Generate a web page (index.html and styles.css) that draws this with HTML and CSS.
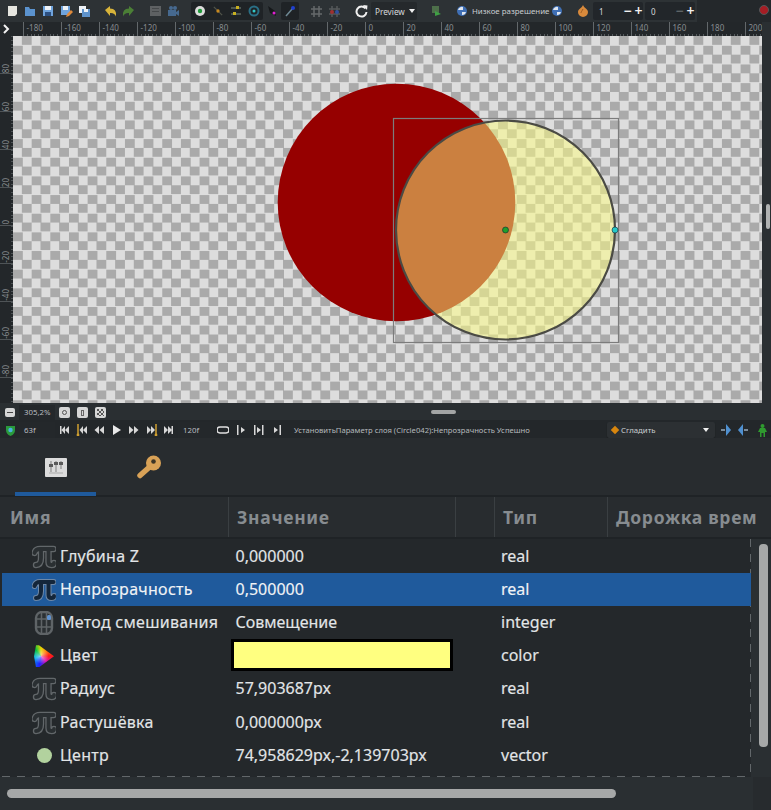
FILE: index.html
```html
<!DOCTYPE html>
<html lang="ru">
<head>
<meta charset="utf-8">
<title>Synfig</title>
<link rel="stylesheet" href="styles.css">
</head>
<body>
<svg class="defs" width="0" height="0">
  <symbol id="pi" viewBox="0 0 24 24"><path d="M2.500 8 Q3.500 4 8 4 H21.500 M9 4 V13 Q9 20 4 20 M16.500 4 V17 Q16.500 20 19.500 20 Q22 20 22 18" fill="none" stroke="#62676a" stroke-width="6.400" stroke-linecap="round" stroke-linejoin="round"/><path d="M2.500 8 Q3.500 4 8 4 H21.500 M9 4 V13 Q9 20 4 20 M16.500 4 V17 Q16.500 20 19.500 20 Q22 20 22 18" fill="none" stroke="#2a2f32" stroke-width="3.800" stroke-linecap="round" stroke-linejoin="round"/></symbol>
  <symbol id="pi-sel" viewBox="0 0 24 24"><path d="M2.500 8 Q3.500 4 8 4 H21.500 M9 4 V13 Q9 20 4 20 M16.500 4 V17 Q16.500 20 19.500 20 Q22 20 22 18" fill="none" stroke="#6f88a6" stroke-width="6" stroke-linecap="round" stroke-linejoin="round"/><path d="M2.500 8 Q3.500 4 8 4 H21.500 M9 4 V13 Q9 20 4 20 M16.500 4 V17 Q16.500 20 19.500 20 Q22 20 22 18" fill="none" stroke="#14263a" stroke-width="4" stroke-linecap="round" stroke-linejoin="round"/></symbol>
  <symbol id="prev" viewBox="0 0 12 12"><path d="M2 2h1.500v8H2zM7 2v8L3.500 6zM11 2v8L7 6z" fill="#d8d8d8"/></symbol>
  <symbol id="back" viewBox="0 0 12 12"><path d="M6 2v8L1.500 6zM11 2v8L6.500 6z" fill="#d8d8d8"/></symbol>
  <symbol id="fwd" viewBox="0 0 12 12"><path d="M1 2v8l4.500-4zM6 2v8l4.500-4z" fill="#d8d8d8"/></symbol>
  <symbol id="next" viewBox="0 0 12 12"><path d="M1 2v8l4-4zM5 2v8l4-4zM8.500 2H10v8H8.500z" fill="#d8d8d8"/></symbol>
  <symbol id="keyprev" viewBox="0 0 12 12"><path d="M7 2v8L3.500 6zM11 2v8L7 6z" fill="#d8d8d8"/><path d="M2 0v12" stroke="#d0a030" stroke-width="1.500"/><circle cx="2" cy="11" r="1.400" fill="#d0a030"/></symbol>
  <symbol id="keynext" viewBox="0 0 12 12"><path d="M1 2v8l4-4zM5 2v8l4-4z" fill="#d8d8d8"/><path d="M10 0v12" stroke="#d0a030" stroke-width="1.500"/><circle cx="10" cy="11" r="1.400" fill="#d0a030"/></symbol>
  <symbol id="ball" viewBox="0 0 12 12"><circle cx="6" cy="6" r="5" fill="#3f6fb5"/><path d="M2 5a4 4 0 0 1 5-3v3zM6 7h4a4 4 0 0 1-4 3z" fill="#dfe6ef"/></symbol>
</svg>

<div class="app">
  <header class="toolbar">
    <div class="tools">
      <span class="slot"><svg width="11" height="12" viewBox="0 0 11 12"><path d="M1 1h9v8l-2 2H1z" fill="#e6e6e0"/></svg></span>
      <span class="slot"><svg width="12" height="11" viewBox="0 0 12 11"><path d="M1 1h4l1 2h5v7H1z" fill="#5b93cf"/></svg></span>
      <span class="slot"><svg width="12" height="12" viewBox="0 0 12 12"><path d="M1 1h10v10H1z" fill="#6fa3dc"/><path d="M3 1h6v4H3z" fill="#eef2f7"/><path d="M3 7h6v4H3z" fill="#2c4f80"/></svg></span>
      <span class="slot"><svg width="13" height="13" viewBox="0 0 13 13"><path d="M1 1h9v9H1z" fill="#6fa3dc"/><path d="M3 1h5v4H3z" fill="#eef2f7"/><path d="M6 12l1-3 4-4 2 2-4 4z" fill="#df8a3c"/></svg></span>
      <span class="slot"><svg width="13" height="13" viewBox="0 0 13 13"><path d="M1 1h7v7H1z" fill="#eef2f7"/><path d="M4 4h8v8H4z" fill="#5f93cc"/><path d="M6 4h4v3H6z" fill="#eef2f7"/></svg></span>
      <span class="gap8"></span>
      <span class="slot"><svg width="13" height="11" viewBox="0 0 13 11"><path d="M1 4l5-4v2.500q7 0 6 8-1.500-4-6-3.500V10z" fill="#d8b43a"/></svg></span>
      <span class="slot"><svg width="13" height="11" viewBox="0 0 13 11"><path d="M12 4L7 0v2.500q-7 0-6 8 1.500-4 6-3.500V10z" fill="#4b7f36"/></svg></span>
      <span class="gap9"></span>
      <span class="slot"><svg width="13" height="12" viewBox="0 0 13 12"><path d="M1 1h11v10H1z" fill="#5e6163"/><path d="M3 3h7v1H3zM3 6h7v1H3z" fill="#45484a"/></svg></span>
      <span class="slot"><svg width="13" height="12" viewBox="0 0 13 12"><path d="M1 5h8v6H1zM9 7l3-2v6l-3-2z" fill="#46698f"/><circle cx="4" cy="3" r="2" fill="#46698f"/><circle cx="8" cy="3" r="2" fill="#46698f"/></svg></span>
      <span class="gap9"></span>
      <div class="tool-group">
        <span class="slot"><svg width="12" height="12" viewBox="0 0 12 12"><circle cx="6" cy="6" r="5" fill="#dcdcdc"/><circle cx="6" cy="6" r="2.200" fill="#1f9a3a"/></svg></span>
        <span class="slot"><svg width="10" height="10" viewBox="0 0 12 12"><path d="M1 1l10 10" stroke="#50544a" stroke-width="1.500"/><circle cx="6" cy="6" r="2" fill="#c88a20"/></svg></span>
        <span class="slot"><svg width="12" height="12" viewBox="0 0 12 12"><path d="M1 3h10M1 9h10" stroke="#5e6a60" stroke-width="1.500"/><path d="M6 1h3v3H6z" fill="#c8b020"/><path d="M3 7h3v3H3z" fill="#c8b020"/></svg></span>
        <span class="slot"><svg width="12" height="12" viewBox="0 0 12 12"><circle cx="6" cy="6" r="4.500" fill="none" stroke="#2a6f85" stroke-width="2"/><circle cx="6" cy="6" r="1.500" fill="#30c8c8"/></svg></span>
      </div>
      <span class="slot"><svg width="12" height="12" viewBox="0 0 12 12"><path d="M2 1l7 5 1 5-6-3z" fill="#15181a"/><circle cx="8" cy="8" r="1.500" fill="#e020d0"/></svg></span>
      <span class="slot active"><svg width="12" height="12" viewBox="0 0 12 12"><path d="M2 11l7-8" stroke="#6f8a95" stroke-width="1.500"/><circle cx="9" cy="3" r="2" fill="#2040d0"/></svg></span>
      <span class="gap8"></span>
      <span class="slot"><svg width="13" height="13" viewBox="0 0 13 13"><path d="M1 4h11M1 9h11M4 1v11M9 1v11" stroke="#65696b" stroke-width="1.500"/></svg></span>
      <span class="slot"><svg width="13" height="13" viewBox="0 0 13 13"><path d="M1 4h11M1 9h11M4 1v11M9 1v11" stroke="#55595b" stroke-width="1.500"/><circle cx="4" cy="7" r="2" fill="#a03030"/><circle cx="9" cy="7" r="2" fill="#3050a0"/></svg></span>
      <span class="gap9"></span>
      <span class="slot"><svg width="13" height="13" viewBox="0 0 13 13"><path d="M10.500 3.500A5 5 0 1 0 11.500 7" fill="none" stroke="#f0f0f0" stroke-width="2"/><path d="M8 0l4.500 .5L12 5z" fill="#f0f0f0"/></svg></span>
      <button class="preview">Preview<i class="caret"></i></button>
      <span class="gap10"></span>
      <span class="slot"><svg width="12" height="12" viewBox="0 0 12 12"><path d="M2 1h7v7H2z" fill="#4d6f4a"/><path d="M5 6l6 3-6 2z" fill="#3fa044"/></svg></span>
      <span class="gap8"></span>
      <span class="slot"><svg width="12" height="12"><use href="#ball"/></svg></span>
      <span class="low-res">Низкое разрешение</span>
      <span class="slot"><svg width="12" height="12"><use href="#ball"/></svg></span>
      <span class="gap8"></span>
      <span class="slot"><svg width="12" height="12" viewBox="0 0 12 12"><path d="M6 0c1 3 5 4 5 7a5 5 0 0 1-10 0c0-3 4-4 5-7z" fill="#d98a3c"/><path d="M6 4c-1 2-2 3-2 4" stroke="#9c5a20" fill="none"/></svg></span>
      <div class="spin">1<span class="spin-btns"><b>−</b><b>+</b></span></div>
      <div class="spin spin2">0<span class="spin-btns"><b class="dim">−</b><b>+</b></span></div>
    </div>
    <span class="record"></span>
  </header>

  <section class="workspace">
    <div class="corner"><svg width="8" height="10" viewBox="0 0 8 10"><path d="M2 1l4 4-4 4" fill="none" stroke="#f2f2f2" stroke-width="2"/></svg></div>
    <div class="h-ruler">
      <span>-180</span><span>-160</span><span>-140</span><span>-120</span><span>-100</span><span>-80</span><span>-60</span><span>-40</span><span>-20</span><span>0</span><span>20</span><span>40</span><span>60</span><span>80</span><span>100</span><span>120</span><span>140</span><span>160</span><span>180</span><span>200</span>
    </div>
    <div class="corner-r"></div>
    <div class="v-ruler">
      <span><i>80</i></span><span><i>60</i></span><span><i>40</i></span><span><i>20</i></span><span><i>0</i></span><span><i>-20</i></span><span><i>-40</i></span><span><i>-60</i></span><span><i>-80</i></span>
    </div>
    <div class="canvas">
      <svg class="scene" width="749" height="367" viewBox="13 36 749 367">
        <circle cx="396.500" cy="202.500" r="118.800" fill="#960000"/>
        <circle cx="505.500" cy="230" r="109.500" fill="#ffff80" fill-opacity=".5" stroke="#4a4a44" stroke-width="2.200"/>
        <rect x="393.500" y="118.500" width="225" height="224" fill="none" stroke="#7c7c7c" stroke-width="1.200"/>
        <circle cx="505.500" cy="230" r="3" fill="#1fa02c" stroke="#123" stroke-width=".6"/>
        <circle cx="615" cy="230" r="3" fill="#26c8c8" stroke="#123" stroke-width=".6"/>
      </svg>
    </div>
    <div class="v-side"><span class="side-thumb"></span></div>
  </section>

  <section class="status">
    <span class="sq-btn narrow"><i class="minus"></i></span>
    <span class="field">305,2%</span>
    <div class="sq-group">
      <span class="sq-btn"><i class="dot"></i></span>
      <span class="sq-btn"><i class="bar"></i></span>
      <span class="sq-btn"><i class="grid4"></i></span>
    </div>
    <span class="handle"></span>
  </section>

  <section class="timebar">
    <span class="shield"><svg width="11" height="11" viewBox="0 0 11 11"><path d="M1 1h9v4q0 4-4.500 6Q1 9 1 5z" fill="#2a9a3c"/><circle cx="5.500" cy="5" r="2.200" fill="#4bb0e0"/></svg></span>
    <span class="field">63f</span>
    <div class="transport">
      <svg width="12" height="12"><use href="#prev"/></svg>
      <svg width="12" height="12"><use href="#keyprev"/></svg>
      <svg width="12" height="12"><use href="#back"/></svg>
      <svg width="12" height="12" viewBox="0 0 12 12"><path d="M2 1v10l8-5z" fill="#e8e8e8"/></svg>
      <svg width="12" height="12"><use href="#fwd"/></svg>
      <svg width="12" height="12"><use href="#keynext"/></svg>
      <svg width="12" height="12"><use href="#next"/></svg>
    </div>
    <span class="field end">120f</span>
    <div class="transport small">
      <svg width="12" height="12" viewBox="0 0 12 12"><path d="M3 3h6a3 3 0 0 1 0 6H3a3 3 0 0 1 0-6" fill="none" stroke="#e0e0e0" stroke-width="1.500"/></svg>
      <svg width="12" height="12" viewBox="0 0 12 12"><path d="M2 1h1.500v10H2zM6 3v6l4-3z" fill="#d8d8d8"/></svg>
      <svg width="12" height="12" viewBox="0 0 12 12"><path d="M1 1h1.500v10H1zM4 3v6l4-3zM9 1h1.500v10H9z" fill="#d8d8d8"/></svg>
      <svg width="12" height="12" viewBox="0 0 12 12"><path d="M3 3v6l4-3zM8.500 1H10v10H8.500z" fill="#d8d8d8"/></svg>
    </div>
    <span class="message">УстановитьПараметр слоя (Circle042):Непрозрачность Успешно</span>
    <div class="combo"><i class="diamond"></i><span>Сгладить</span><i class="caret"></i></div>
    <span class="t-icon first"><svg width="12" height="12" viewBox="0 0 12 12"><path d="M6 0l5 6-5 6z" fill="#4f90d0"/><path d="M1 5h4v2H1z" fill="#7a8a9a"/></svg></span>
    <span class="t-icon"><svg width="12" height="12" viewBox="0 0 12 12"><path d="M6 0L1 6l5 6z" fill="#4f90d0"/><path d="M7 5h4v2H7z" fill="#7a8a9a"/></svg></span>
    <span class="t-icon last"><svg width="11" height="13" viewBox="0 0 11 13"><circle cx="5.500" cy="2" r="2" fill="#2f9a2f"/><path d="M3 4h5l2 4H8v5H6.500V9h-2v4H3V8H1z" fill="#2f9a2f"/></svg></span>
  </section>

  <nav class="tabs">
    <div class="tab on">
      <svg width="22" height="19" viewBox="0 0 22 19"><rect width="22" height="19" rx="1" fill="#dcdcdc"/><path d="M6 3v11M11 3v11M16 3v8" stroke="#9a9a9a" stroke-width="1.400"/><path d="M4 6h4v3H4zM9 4h4v3H9zM14 4h4v3h-4z" fill="#5a5a5a"/><path d="M4 15h14" stroke="#aaa"/></svg>
    </div>
    <div class="tab">
      <svg width="26" height="25" viewBox="0 0 26 25"><circle cx="17.500" cy="8" r="7.500" fill="#d9a257"/><circle cx="17.500" cy="6.500" r="2.300" fill="#3d3526"/><path d="M13 12.500L4 20.500" stroke="#d9a257" stroke-width="5.500" stroke-linecap="round"/></svg>
    </div>
  </nav>

  <div class="thead">
    <span class="th c1">Имя</span>
    <span class="th c2">Значение</span>
    <span class="th c3"></span>
    <span class="th c4">Тип</span>
    <span class="th c5">Дорожка врем</span>
  </div>

  <section class="tbody-wrap">
    <div class="tbody">
      <div class="row">
        <svg class="ico" width="24" height="24"><use href="#pi"/></svg><span class="name">Глубина Z</span><span class="val">0,000000</span><span class="type">real</span>
      </div>
      <div class="row sel">
        <svg class="ico" width="24" height="24"><use href="#pi-sel"/></svg><span class="name">Непрозрачность</span><span class="val">0,500000</span><span class="type">real</span>
      </div>
      <div class="row">
        <svg class="ico" width="24" height="24" viewBox="0 0 24 24"><rect x="4" y="1" width="16" height="22" rx="6" fill="#2b3033" stroke="#5f6467" stroke-width="2.400"/><path d="M4 8h16M4 16h16M9.500 2v20M14.500 2v20" stroke="#5f6467" stroke-width="1.500"/><rect x="15" y="4" width="4" height="5" rx="1.500" fill="#5f92d0"/></svg><span class="name">Метод смешивания</span><span class="val">Совмещение</span><span class="type">integer</span>
      </div>
      <div class="row">
        <span class="ico hue"></span><span class="name">Цвет</span><span class="val"><span class="swatch"></span></span><span class="type">color</span>
      </div>
      <div class="row">
        <svg class="ico" width="24" height="24"><use href="#pi"/></svg><span class="name">Радиус</span><span class="val">57,903687px</span><span class="type">real</span>
      </div>
      <div class="row">
        <svg class="ico" width="24" height="24"><use href="#pi"/></svg><span class="name">Растушёвка</span><span class="val">0,000000px</span><span class="type">real</span>
      </div>
      <div class="row">
        <span class="ico vec"><i></i></span><span class="name">Центр</span><span class="val">74,958629px,-2,139703px</span><span class="type">vector</span>
      </div>
    </div>
    <div class="vscroll"><span class="vthumb"></span></div>
  </section>

  <footer class="hscroll-row">
    <div class="hscroll"><span class="hthumb"></span></div>
    <div class="sc-corner"></div>
  </footer>
</div>
</body>
</html>
```
FILE: styles.css
```css
* { box-sizing: border-box; }
html, body { margin: 0; padding: 0; }
body { background: #2a2f32; font-family: "Noto Sans", "Open Sans", sans-serif; color: #e6e8ea; }
.defs { position: absolute; }
.app { width: 771px; height: 810px; overflow: hidden; display: flex; flex-direction: column; background: #2a2f32; }

.toolbar { height: 22px; display: flex; align-items: stretch; background: #24282b; }
.tools { width: 697px; padding-left: 3px; display: flex; align-items: center; background: #2d3235; }
.slot { width: 18px; height: 18px; flex: none; display: flex; align-items: center; justify-content: center; }
.slot.active { background: #1f2326; border-radius: 2px; }
.gap8 { width: 8px; flex: none; }
.gap9 { width: 9px; flex: none; }
.gap10 { width: 10px; flex: none; }
.tool-group { display: flex; background: #1f2326; border-radius: 2px; }
.preview { width: 46px; height: 18px; margin-left: 1px; padding: 0 0 0 4px; display: flex; align-items: center; gap: 4px; font: 8.2px "Noto Sans", sans-serif; color: #d8dadc; background: #25292c; border: 0; border-radius: 2px; }
.caret { width: 0; height: 0; border-left: 3.5px solid transparent; border-right: 3.5px solid transparent; border-top: 4px solid #f0f0f0; }
.low-res { width: 76px; font-size: 7.9px; color: #c9cdd0; white-space: nowrap; margin-left: 1px; }
.spin { width: 50px; height: 18px; flex: none; margin-left: 1px; padding-left: 6px; display: flex; align-items: center; justify-content: space-between; font-size: 8px; color: #d8dadc; background: #22262a; border-radius: 2px; }
.spin2 { margin-left: 2px; }
.spin-btns { display: flex; gap: 2px; }
.spin-btns b { width: 9px; text-align: center; font-size: 14px; line-height: 14px; font-weight: 600; color: #f2f2f2; }
.spin-btns b.dim { color: #5f6467; }
.record { width: 10px; height: 10px; margin: 5px 2px 0 auto; border-radius: 50%; background: #a51d24; border: 1px solid #53585a; }

.workspace { height: 381px; display: grid; grid-template-columns: 13px 749px 9px; grid-template-rows: 14px 367px; background: #2a2f32; }
.corner { background: #23272a; display: flex; align-items: center; justify-content: center; padding-right: 1px; }
.corner-r { background: #2a2f32; }
.h-ruler { display: flex; padding-left: 9.5px; overflow: hidden; background-color: #23272a; background-image: repeating-linear-gradient(90deg, #565b5e 0 1px, transparent 1px 3.8px); background-size: 100% 2px; background-position: 9.5px bottom; background-repeat: no-repeat; }
.h-ruler span { flex: none; width: 38px; height: 14px; padding-left: 3px; border-left: 1px solid #63686b; font-size: 8px; line-height: 11px; color: #878c8f; }
.v-ruler { display: flex; flex-direction: column; padding-top: 0; overflow: hidden; background-color: #23272a; background-image: repeating-linear-gradient(180deg, #4d5255 0 1px, transparent 1px 3.8px); background-size: 2px 100%; background-position: right top; background-repeat: no-repeat; }
.v-ruler span { flex: none; height: 38px; padding-left: 2px; display: flex; align-items: flex-end; border-bottom: 1px solid #4f5457; }
.v-ruler i { writing-mode: vertical-rl; transform: rotate(180deg); font-style: normal; font-size: 8px; line-height: 8px; color: #878c8f; }
.canvas { position: relative; overflow: hidden; background-color: #ddd; background-image: conic-gradient(#aaa 25%, #ddd 0 50%, #aaa 0 75%, #ddd 0); background-size: 18.66px 18.66px; }
.scene { position: absolute; left: 0; top: 0; }
.v-side { position: relative; background: #2a2f32; }
.side-thumb { position: absolute; right: 1px; top: 168px; width: 4px; height: 25px; border-radius: 2px; background: #b0b2b2; }

.status { height: 17px; position: relative; display: flex; align-items: center; padding: 2px 0 0 5px; background: #2a2f32; }
.status .field { height: 15px; line-height: 15px; margin-left: 4px; }
.field { width: 36px; flex: none; padding-left: 5px; font-size: 7.8px; color: #b9bdc0; background: #24282b; }
.sq-btn { width: 11px; height: 11px; flex: none; display: flex; align-items: center; justify-content: center; background: #d6d7d7; border-radius: 2px; }
.sq-btn.narrow { width: 10px; height: 9px; }
.sq-group { display: flex; gap: 7px; margin-left: 4px; }
.minus { width: 6px; height: 1px; background: #444; }
.dot { width: 5px; height: 5px; border: 1px solid #555; border-radius: 50%; }
.bar { width: 3px; height: 6px; border: 1px solid #666; }
.grid4 { width: 7px; height: 7px; background: conic-gradient(#d6d7d7 25%, #555 0 50%, #d6d7d7 0 75%, #555 0); background-size: 4px 4px; }
.handle { position: absolute; left: 431px; top: 7px; width: 25px; height: 4px; border-radius: 2px; background: #a3a5a5; }

.timebar { height: 18px; display: flex; align-items: center; padding: 2px 0 0 5px; background: #23272a; font-size: 7.8px; }
.shield { width: 14px; display: flex; }
.timebar .field { height: 16px; line-height: 16px; }
.transport { display: flex; gap: 5.500px; padding: 0 3px; }
.transport.small { padding-left: 3px; gap: 6px; }
.field.end { width: 36px; }
.message { width: 313px; margin-left: 8px; flex: none; white-space: nowrap; color: #b6babd; font-size: 7.65px; }
.combo { width: 108px; height: 16px; display: flex; align-items: center; padding: 0 6px 0 5px; background: #2c3033; border-radius: 2px; box-shadow: 0 1px 1px #181b1d; color: #c9cdd0; }
.combo span { margin-left: 3px; flex: 1; }
.diamond { width: 6px; height: 6px; transform: rotate(45deg); background: #d8860e; }
.t-icon { width: 17px; display: flex; justify-content: center; }
.t-icon.first { margin-left: 2px; }
.t-icon.last { margin-left: 3px; }

.tabs { height: 59px; display: flex; padding-left: 15px; background: #282c2f; border-bottom: 2px solid #1f2326; }
.tab { width: 81px; height: 58px; flex: none; display: flex; align-items: center; justify-content: center; padding-top: 4px; border-bottom: 4px solid transparent; }
.tab + .tab { width: 106px; }
.tab.on { border-bottom-color: #1f5a9c; }

.thead { height: 42px; flex: none; display: flex; background: #282c2f; border-bottom: 2px solid #1f2326; }
.th { flex: none; padding-left: 8px; line-height: 40px; font-size: 17.5px; font-weight: 700; color: #878c90; letter-spacing: .7px; white-space: nowrap; overflow: hidden; border-right: 1px solid #3a3f42; }
.c1 { width: 229px; padding-left: 10px; }
.c2 { width: 227px; }
.c3 { width: 39px; }
.c4 { width: 113px; }
.c5 { flex: 1; border-right: 0; }

.tbody-wrap { height: 238px; flex: none; display: flex; background: #24282b; }
.tbody { width: 749px; margin-left: 2px; padding-top: 1px; background-color: #24282b; background-image: repeating-linear-gradient(90deg, #62676a 0 8px, transparent 8px 15px), repeating-linear-gradient(180deg, #62676a 0 8px, transparent 8px 15px); background-size: 100% 1px, 1px 100%; background-position: left bottom, right top; background-repeat: no-repeat; }
.row { height: 33.2px; display: flex; align-items: center; padding-left: 30px; font-size: 16px; color: #e2e5e7; position: relative; -webkit-text-stroke: .15px currentColor; }
.row.sel { background: #1f5a9c; color: #f0f3f6; }
.ico { width: 24px; height: 24px; flex: none; }
.hue { width: 20px; height: 22px; margin-left: 2px; margin-right: 2px; background: radial-gradient(circle at 35% 50%, rgba(255,255,255,.55), rgba(255,255,255,0) 45%), conic-gradient(from 0deg at 35% 50%, #e8d800 0deg, #ff8000 45deg, #ff1818 90deg, #e010b0 135deg, #2020ff 190deg, #00b0f0 250deg, #00c040 320deg, #e8d800 360deg); clip-path: polygon(10% 0, 25% 0, 100% 50%, 25% 100%, 10% 100%, 0 50%); }
.vec { display: flex; align-items: center; justify-content: center; }
.vec i { width: 15px; height: 15px; border-radius: 50%; background: #b2d29e; }
.name { width: 179.500px; flex: none; padding-left: 4px; margin-top: -2px; letter-spacing: .28px; white-space: nowrap; }
.val { width: 265.500px; flex: none; margin-top: -2px; white-space: nowrap; }
.type { flex: none; margin-top: -2px; }
.swatch { display: block; width: 222px; height: 32px; margin-left: -5px; background: #ffff80; border: 3px solid #000; }
.vscroll { flex: 1; position: relative; background: #2a2f32; }
.vthumb { position: absolute; left: 8px; top: 5px; width: 9px; height: 203px; border-radius: 4px; background: #a6a8a8; }

.hscroll-row { flex: 1; display: flex; background: #2a2f32; }
.hscroll { width: 753px; position: relative; }
.hthumb { position: absolute; left: 7px; top: 12px; width: 609px; height: 9px; border-radius: 5px; background: #a6a8a8; }
.sc-corner { flex: 1; background: #272b2e; }
```
